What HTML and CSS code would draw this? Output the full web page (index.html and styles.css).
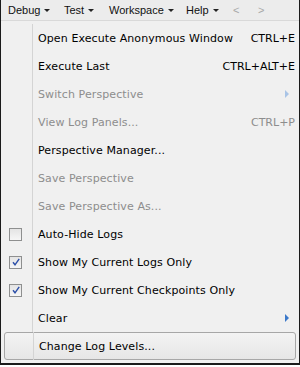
FILE: index.html
```html
<!DOCTYPE html>
<html>
<head>
<meta charset="utf-8">
<link rel="stylesheet" href="styles.css">
</head>
<body>
<div class="frame">
  <div class="menubar">
    <span class="mb-item mb-debug">Debug<span class="caret"></span></span>
    <span class="mb-item mb-test">Test<span class="caret"></span></span>
    <span class="mb-item mb-ws">Workspace<span class="caret"></span></span>
    <span class="mb-item mb-help">Help<span class="caret"></span></span>
    <span class="mb-nav">&lt;</span>
    <span class="mb-nav">&gt;</span>
  </div>
  <div class="menu">
    <div class="row"><span class="gutter"></span><span class="label">Open Execute Anonymous Window</span><span class="key">CTRL+E</span></div>
    <div class="row"><span class="gutter"></span><span class="label">Execute Last</span><span class="key">CTRL+ALT+E</span></div>
    <div class="row disabled"><span class="gutter"></span><span class="label">Switch Perspective</span><span class="arrow arrow-light"></span></div>
    <div class="row disabled"><span class="gutter"></span><span class="label">View Log Panels...</span><span class="key">CTRL+P</span></div>
    <div class="row"><span class="gutter"></span><span class="label">Perspective Manager...</span></div>
    <div class="row disabled"><span class="gutter"></span><span class="label">Save Perspective</span></div>
    <div class="row disabled"><span class="gutter"></span><span class="label">Save Perspective As...</span></div>
    <div class="row"><span class="gutter"><span class="cb"></span></span><span class="label">Auto-Hide Logs</span></div>
    <div class="row"><span class="gutter"><span class="cb checked"><svg viewBox="0 0 10 10" width="10" height="10"><path d="M2 5.2 L4 7.8 L8.2 1.8" fill="none" stroke="#2c4fa8" stroke-width="1.4"/></svg></span></span><span class="label">Show My Current Logs Only</span></div>
    <div class="row"><span class="gutter"><span class="cb checked"><svg viewBox="0 0 10 10" width="10" height="10"><path d="M2 5.2 L4 7.8 L8.2 1.8" fill="none" stroke="#2c4fa8" stroke-width="1.4"/></svg></span></span><span class="label">Show My Current Checkpoints Only</span></div>
    <div class="row"><span class="gutter"></span><span class="label">Clear</span><span class="arrow"></span></div>
    <div class="row hover"><span class="gutter"></span><span class="label">Change Log Levels...</span></div>
  </div>
</div>
</body>
</html>
```
FILE: styles.css
```css
html, body {
  margin: 0;
  padding: 0;
  background: #ffffff;
}
.frame {
  width: 300px;
  height: 365px;
  box-sizing: border-box;
  border-left: 1px solid #1a1a1a;
  border-right: 1px solid #1a1a1a;
  border-bottom: 2px solid #1a1a1a;
  background: #f0f0f0;
  font-family: Tahoma, "DejaVu Sans", sans-serif;
  font-size: 11px;
  color: #000;
  overflow: hidden;
}
.menubar {
  height: 20px;
  display: flex;
  align-items: center;
  background: #ececec;
  border-bottom: 1px solid #d9d9d9;
  padding-left: 7px;
  font-family: "Liberation Sans", Arial, sans-serif;
  font-size: 11px;
}
.mb-item {
  display: flex;
  align-items: center;
  color: #111;
  flex: none;
}
.mb-debug { width: 56px; }
.mb-test { width: 45px; }
.mb-ws { width: 77px; }
.mb-help { width: 47px; }
.caret {
  width: 0;
  height: 0;
  border-left: 3px solid transparent;
  border-right: 3px solid transparent;
  border-top: 3px solid #222;
  margin-left: 4px;
  margin-top: 1px;
}
.mb-nav {
  color: #a8a8a8;
  width: 25px;
  flex: none;
}
.menu {
  padding: 3px 2px 0 2px;
}
.row {
  height: 28px;
  display: flex;
  align-items: center;
  position: relative;
  box-sizing: border-box;
}
.gutter {
  width: 30px;
  height: 28px;
  border-right: 1px solid #d4d4d4;
  display: flex;
  align-items: center;
  justify-content: center;
  box-sizing: border-box;
  flex: none;
}
.label {
  padding-left: 5px;
  flex: 1;
  letter-spacing: 0.1px;
}
.key {
  padding-right: 2px;
}
.disabled {
  color: #8d8d8d;
}
.arrow {
  width: 0;
  height: 0;
  border-top: 4px solid transparent;
  border-bottom: 4px solid transparent;
  border-left: 4px solid #3b78c9;
  margin-right: 8px;
}
.arrow-light {
  border-left-color: #a9c4e6;
}
.cb {
  width: 11px;
  height: 11px;
  border: 1px solid #8e8f8f;
  background: linear-gradient(#e4e4e4, #f6f6f6);
  display: flex;
  align-items: center;
  justify-content: center;
  margin-left: -4px;
}
.hover {
  border: 1px solid #a7a7a7;
  border-radius: 3px;
  background: linear-gradient(#f3f3f3, #e6e6e6);
  margin: 0 1px 0 1px;
}
.hover .gutter {
  width: 29px;
}
```
